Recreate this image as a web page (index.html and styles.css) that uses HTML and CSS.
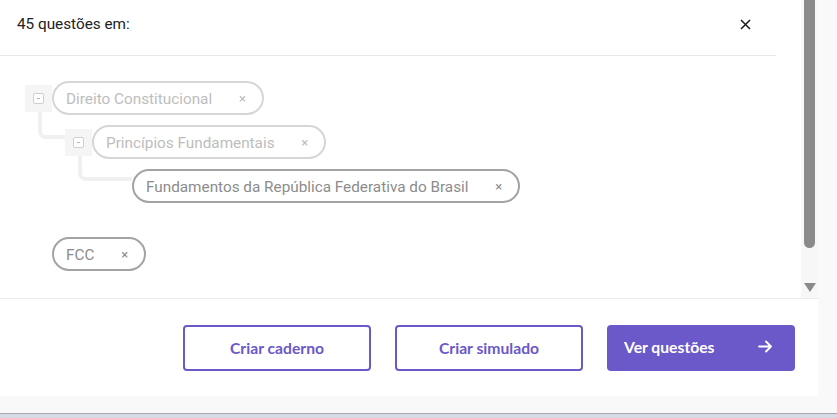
FILE: index.html
```html
<!DOCTYPE html>
<html lang="pt-BR">
<head>
    <meta charset="UTF-8">
    <title>45 questões em</title>
    <link rel="stylesheet" href="styles.css">
</head>
<body>

    <div class="modal">
        <div class="modal-body">
            <div class="content">
                <!-- Cabeçalho -->
                <div class="header">
                    <span class="title">45 questões em:</span>
                    <button class="close" type="button">
                        <svg width="11" height="11" viewBox="0 0 11 11">
                            <path d="M1 1 L10 10 M10 1 L1 10" stroke="#1f1f1f" stroke-width="1.6" fill="none"/>
                        </svg>
                    </button>
                </div>

                <!-- Árvore de filtros -->
                <div class="tree">
                    <div class="node level-1">
                        <span class="toggle"><span class="toggle-icon"></span></span>
                        <span class="chip faded">Direito Constitucional <span class="remove">×</span></span>
                    </div>
                    <div class="node level-2 linked">
                        <span class="toggle"><span class="toggle-icon"></span></span>
                        <span class="chip faded">Princípios Fundamentais <span class="remove">×</span></span>
                    </div>
                    <div class="node level-3 linked">
                        <span class="chip">Fundamentos da República Federativa do Brasil <span class="remove">×</span></span>
                    </div>
                    <div class="node filter">
                        <span class="chip">FCC <span class="remove">×</span></span>
                    </div>
                </div>
            </div>

            <!-- Barra de rolagem -->
            <div class="scrollbar">
                <div class="thumb"></div>
                <div class="arrow"></div>
            </div>
        </div>

        <div class="footer">
            <button class="btn outline" type="button">Criar caderno</button>
            <button class="btn outline" type="button">Criar simulado</button>
            <button class="btn primary" type="button">
                <span>Ver questões</span>
                <svg width="15" height="13" viewBox="0 0 15 13">
                    <path d="M1 6.5 H13 M8 1.5 L13 6.5 L8 11.5" stroke="#ffffff" stroke-width="1.8" fill="none" stroke-linecap="round" stroke-linejoin="round"/>
                </svg>
            </button>
        </div>
    </div>

    <div class="bottom-strip"></div>
    <div class="taskbar"></div>

</body>
</html>
```

FILE: styles.css
```css
/* Page */
body {
    margin: 0;
    padding: 0;
    width: 837px;
    height: 418px;
    overflow: hidden;
    background: #f9f9f9;
    font-family: Roboto, "Liberation Sans", Arial, sans-serif;
}

/* Modal */
.modal {
    width: 818px;
    height: 396px;
    background: #ffffff;
    display: flex;
    flex-direction: column;
}

.modal-body {
    height: 298px;
    display: flex;
}

.content {
    width: 801px;
}

.header {
    height: 56px;
    margin-right: 25px;
    border-bottom: 1px solid #e8e8e8;
    display: flex;
    justify-content: space-between;
    align-items: flex-start;
    padding-left: 17px;
    box-sizing: border-box;
}

.title {
    margin-top: 15px;
    font-size: 15.3px;
    line-height: 18px;
    color: #222222;
}

.close {
    margin-top: 19px;
    margin-right: 25px;
    padding: 0;
    border: 0;
    background: none;
    width: 11px;
    height: 11px;
    display: flex;
}

/* Arbre */
.tree {
    padding-top: 25px;
}

.node {
    display: flex;
    align-items: center;
    height: 34px;
    position: relative;
    margin-bottom: 10px;
}

.level-1 { margin-left: 25px; }
.level-2 { margin-left: 65px; }
.level-3 { margin-left: 132px; }

.filter {
    margin-left: 52px;
    margin-top: 34px;
}

/* Connecteurs */
.linked::before {
    content: "";
    position: absolute;
    top: -13px;
    border-left: 4px solid #f0f0f0;
    border-bottom: 4px solid #f0f0f0;
    border-bottom-left-radius: 8px;
    box-sizing: border-box;
}

.level-2::before {
    left: -27px;
    width: 27px;
    height: 27px;
}

.level-3::before {
    left: -54px;
    width: 54px;
    height: 25px;
}

.toggle {
    width: 27px;
    height: 27px;
    background: #f5f5f5;
    display: flex;
    align-items: center;
    justify-content: center;
}

.toggle-icon {
    width: 11px;
    height: 11px;
    border: 1px solid #cfcfcf;
    border-radius: 2px;
    box-sizing: border-box;
    position: relative;
    background: #ffffff;
}

.toggle-icon::after {
    content: "";
    position: absolute;
    left: 3px;
    top: 4px;
    width: 3px;
    height: 1px;
    background: #b5b5b5;
}

.chip {
    height: 34px;
    box-sizing: border-box;
    border: 2px solid #a3a3a3;
    border-radius: 17px;
    padding: 1px 16px 0 12px;
    display: flex;
    align-items: center;
    font-size: 15.3px;
    color: #8c8c8c;
    white-space: pre;
}

.chip.faded {
    border-color: #d6d6d6;
    color: #bdbdbd;
}

.remove {
    margin-left: 23px;
    font-size: 13px;
}

/* Barre de défilement */
.scrollbar {
    width: 17px;
    background: #f7f7f7;
    display: flex;
    flex-direction: column;
    align-items: center;
}

.thumb {
    width: 11px;
    height: 248px;
    background: #8a8a8a;
    border-radius: 0 0 6px 6px;
}

.arrow {
    margin-top: 35px;
    width: 0;
    height: 0;
    border-left: 6.5px solid transparent;
    border-right: 6.5px solid transparent;
    border-top: 9px solid #8a8a8a;
}

/* Pied */
.footer {
    flex: 1;
    border-top: 1px solid #ebebeb;
    display: flex;
    justify-content: flex-end;
    align-items: center;
    gap: 24px;
    padding-right: 23px;
}

.btn {
    width: 188px;
    height: 46px;
    border-radius: 4px;
    font-family: Lato, "Open Sans", sans-serif;
    font-weight: 700;
    font-size: 15.7px;
    cursor: pointer;
}

.outline {
    border: 2px solid #6b58c9;
    background: #ffffff;
    color: #6b58c9;
}

.primary {
    border: 0;
    background: #6b58c9;
    color: #ffffff;
    display: flex;
    justify-content: space-between;
    align-items: center;
    padding: 0 22px 2px 17px;
}

.bottom-strip {
    height: 17px;
    background: #f9f9f9;
    border-bottom: 1px solid #a4a8b0;
}

.taskbar {
    height: 4px;
    background: #d6dce7;
}
```
